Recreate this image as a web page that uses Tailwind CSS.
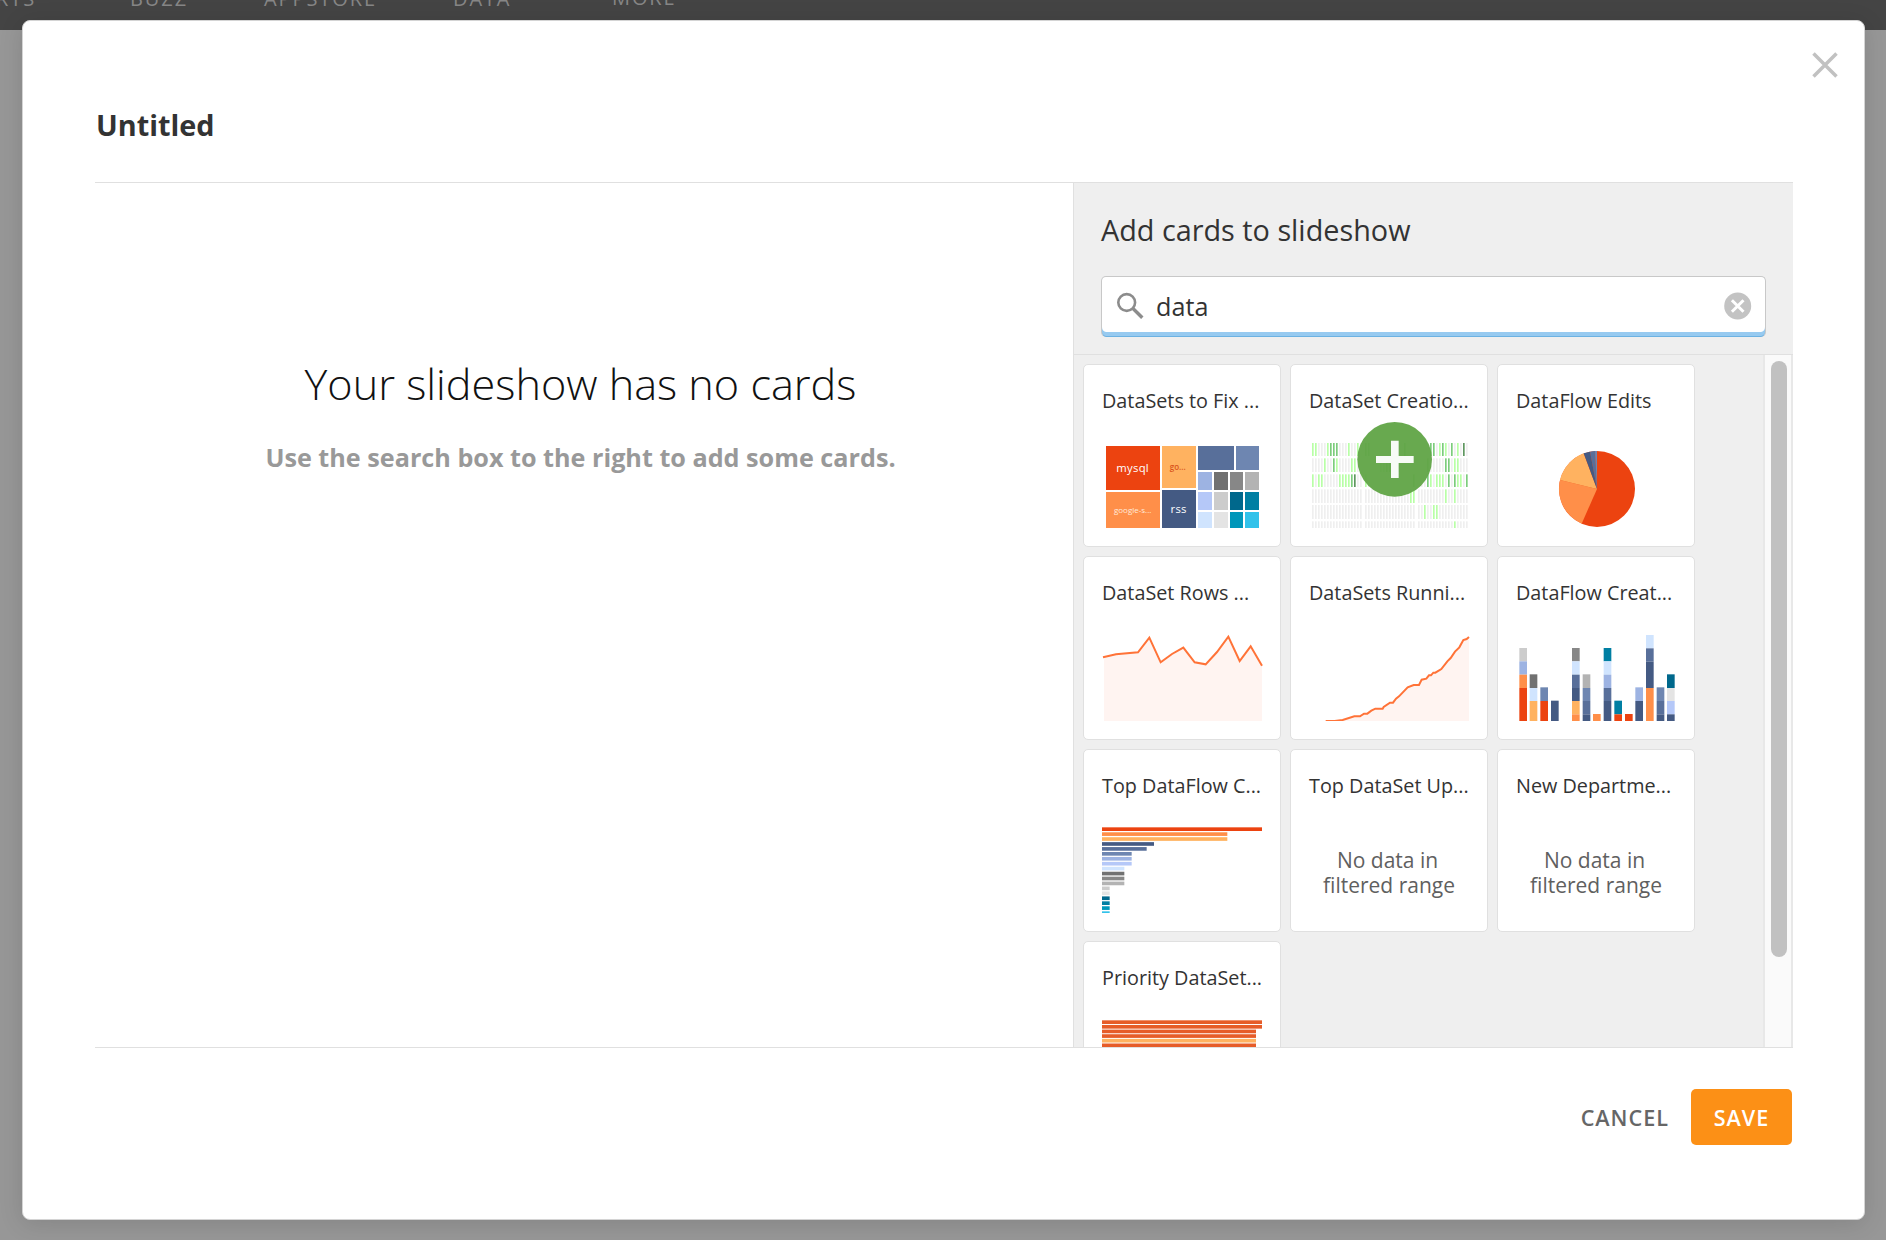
<!DOCTYPE html>
<html lang="en">
<head>
  <meta charset="UTF-8" />
  <meta name="viewport" content="width=device-width, initial-scale=1.0"/>
  <title>Edit Slideshow</title>
  <script src="https://cdn.jsdelivr.net/npm/@tailwindcss/browser@4"></script>
</head>
<body class="relative h-[1240px] w-[1886px] overflow-hidden bg-[#979797] font-['Open_Sans',sans-serif] text-[#333]">

  <!-- Page nav behind the modal -->
  <nav class="flex h-[30px] bg-[#444] text-[20px] leading-[28px] font-medium tracking-[1.9px] text-[#868686]">
    <span class="-mt-[15px] -ml-[4px] w-[134px]">RTS</span>
    <span class="-mt-[15px] w-[134px]">BUZZ</span>
    <span class="-mt-[15px] w-[189px]">APPSTORE</span>
    <span class="-mt-[15px] w-[159px]">DATA</span>
    <span class="-mt-[16px]">MORE</span>
  </nav>

  <!-- Modal -->
  <div class="absolute top-[20px] left-[22px] flex h-[1200px] w-[1843px] flex-col rounded-[8px] border border-[#d4d4d4] bg-white pr-[71px] pl-[72px] shadow-[0_4px_24px_rgba(0,0,0,0.12)]">
    <button class="absolute top-[31px] right-[26.5px]" aria-label="Close">
      <svg width="26" height="26" viewBox="0 0 26 26" fill="none" stroke="#c1c1c1" stroke-width="3.5"><path d="M1.5 1.5 24.5 24.5M24.5 1.5 1.5 24.5"/></svg>
    </button>

    <header class="h-[161px] shrink-0 pt-[84px] pl-px">
      <h1 class="text-[28.8px] leading-[40px] font-bold">Untitled</h1>
    </header>

    <main class="flex h-[866px] shrink-0 border-y border-[#e0e0e0]">
      <!-- Empty state -->
      <section class="w-[978px] pt-[171px] pr-[7px] text-center">
        <h2 class="text-[43.2px] leading-[60px] font-light whitespace-nowrap text-[#111]">Your slideshow has no cards</h2>
        <p class="mt-[25px] text-[25.2px] leading-[36px] font-bold whitespace-nowrap text-[#999]">Use the search box to the right to add some cards.</p>
      </section>

      <!-- Card picker -->
      <aside class="-mr-px flex w-[720px] shrink-0 flex-col border-l border-[#e0e0e0] bg-[#efefef]">
        <div class="h-[172px] shrink-0 border-b border-[#e0e0e0] pt-[27px] pl-[27px]">
          <h3 class="text-[28.8px] leading-[40px] whitespace-nowrap">Add cards to slideshow</h3>
          <div class="mt-[26px] flex h-[61px] w-[665px] items-center overflow-hidden rounded-[5px] border border-b-0 border-[#c8c8c8] bg-white shadow-[inset_0_-1px_#6cb2e2,inset_0_-5px_#97caf0]">
            <svg class="mb-[3px] ml-[14px]" width="28" height="28" viewBox="0 0 28 28" fill="none" stroke="#8c8c8c"><circle cx="10.7" cy="10.5" r="8.4" stroke-width="2.6"/><path d="M17 16.5 26.3 25.8" stroke-width="3.4"/></svg>
            <span class="mb-[3px] ml-[12px] text-[25.2px] leading-[36px]">data</span>
            <svg class="mr-[13px] mb-[2px] ml-auto" width="28" height="28" viewBox="0 0 28 28"><circle cx="13.7" cy="14" r="13.5" fill="#c3c3c3"/><path d="M7.9 8.2 19.5 19.8M19.5 8.2 7.9 19.8" stroke="#fff" stroke-width="3"/></svg>
          </div>
        </div>

        <div class="flex h-[692px] overflow-hidden">
          <div class="grid w-[689px] grid-cols-[198px_198px_198px] grid-rows-[192px_193px_192px_192px] gap-x-[9px] pt-[9px] pl-[9px]">

            <div class="h-[183px] overflow-hidden rounded-[5px] border border-[#e0e0e0] bg-white">
              <h4 class="h-[60px] pt-[22px] pl-[18px] text-[19.8px] leading-[28px] whitespace-nowrap">DataSets to Fix ...</h4>
              <svg width="196" height="121" viewBox="42 225 588 363" shape-rendering="crispEdges">
                <rect x="108" y="288" width="162" height="132" fill="#ec4310"/>
                <rect x="108" y="426" width="162" height="108" fill="#ff8f49"/>
                <rect x="276" y="288" width="102" height="126" fill="#ffb260"/>
                <rect x="276" y="420" width="102" height="114" fill="#445a83"/>
                <rect x="384" y="288" width="108" height="72" fill="#586f9a"/>
                <rect x="498" y="288" width="69" height="72" fill="#6e86b1"/>
                <rect x="384" y="366" width="42" height="54" fill="#9db3e2"/>
                <rect x="432" y="366" width="42" height="54" fill="#717171"/>
                <rect x="480" y="366" width="39" height="54" fill="#878787"/>
                <rect x="525" y="366" width="42" height="54" fill="#b3b3b3"/>
                <rect x="384" y="426" width="42" height="54" fill="#b5c8f8"/>
                <rect x="432" y="426" width="42" height="54" fill="#cccccc"/>
                <rect x="480" y="426" width="39" height="54" fill="#00688c"/>
                <rect x="525" y="426" width="42" height="54" fill="#007fa3"/>
                <rect x="384" y="486" width="42" height="48" fill="#d0e4fe"/>
                <rect x="432" y="486" width="42" height="48" fill="#e4e4e4"/>
                <rect x="480" y="486" width="39" height="48" fill="#0097ba"/>
                <rect x="525" y="486" width="42" height="48" fill="#32c2ea"/>
                <g text-anchor="middle" fill="#fff">
                  <text x="188" y="367" font-size="34" letter-spacing="0.8">mysql</text>
                  <text x="326" y="489" font-size="34" letter-spacing="0.8">rss</text>
                  <text x="188" y="489" font-size="24" font-weight="500" fill="#ffeadb">google-s...</text>
                  <text x="323" y="360" font-size="24" font-weight="600" fill="#d9521b">go...</text>
                </g>
              </svg>
            </div>

            <div class="h-[183px] overflow-hidden rounded-[5px] border border-[#e0e0e0] bg-white">
              <h4 class="h-[60px] pt-[22px] pl-[18px] text-[19.8px] leading-[28px] whitespace-nowrap">DataSet Creatio...</h4>
              <svg class="overflow-visible" width="196" height="121" viewBox="33 225 588 363">
                <g id="heatmap"></g>
                <circle cx="344" cy="328" r="112" fill="#62a548" fill-opacity="0.96"/>
                <path d="M333 272h23v46h45v21h-45v45h-23v-45h-45v-21h45z" fill="#fff" fill-opacity="0.95"/>
              </svg>
            </div>

            <div class="h-[183px] overflow-hidden rounded-[5px] border border-[#e0e0e0] bg-white">
              <h4 class="h-[60px] pt-[22px] pl-[18px] text-[19.8px] leading-[28px] whitespace-nowrap">DataFlow Edits</h4>
              <svg width="196" height="121" viewBox="24 225 588 363">
                <circle cx="321" cy="417" r="114" fill="#ec4310"/>
                <path d="M321 417 275 521A114 114 0 0 1 210 390Z" fill="#ff8f49"/>
                <path d="M321 417 210 390A114 114 0 0 1 281 310Z" fill="#ffb260"/>
                <path d="M321 417 281 310A114 114 0 0 1 300 305Z" fill="#445a83"/>
                <path d="M321 417 300 305A114 114 0 0 1 315 303Z" fill="#586f9a"/>
                <path d="M321 417 315 303A114 114 0 0 1 321 303Z" fill="#6e86b1"/>
              </svg>
            </div>

            <div class="h-[184px] overflow-hidden rounded-[5px] border border-[#e0e0e0] bg-white">
              <h4 class="h-[60px] pt-[22px] pl-[18px] text-[19.8px] leading-[28px] whitespace-nowrap">DataSet Rows ...</h4>
              <svg width="196" height="121" viewBox="42 201 588 363">
                <path d="M102 322 138 313 204 307 238 263 272 337 306 312 340 293 374 337 407 343 441 306 475 260 509 333 542 289 576 347V513H102Z" fill="#fff4f1"/>
                <path d="M99 322 138 313 204 307 238 263 272 337 306 312 340 293 374 337 407 343 441 306 475 260 509 333 542 289 576 347" fill="none" stroke="#ff7338" stroke-width="6"/>
              </svg>
            </div>

            <div class="h-[184px] overflow-hidden rounded-[5px] border border-[#e0e0e0] bg-white">
              <h4 class="h-[60px] pt-[22px] pl-[18px] text-[19.8px] leading-[28px] whitespace-nowrap">DataSets Runni...</h4>
              <svg width="196" height="121" viewBox="663 201 588 363">
                <path d="M794 512 818 510 853 499H870L882 491H892L916 476H938L960 458H969L978 446 1013 412 1031 405H1047L1055 389 1069 386 1077 376 1090 368 1114 357 1132 334 1142 324 1155 305 1168 292 1180 270 1197 262V513H794Z" fill="#fff4f1"/>
                <path d="M767 513H794L818 510 853 499H870L882 491H892L904 482 916 476H938L941 471 960 458H969L978 446 987 439 1013 412 1031 405H1047L1055 389 1069 386 1077 376H1083L1090 368H1096L1114 357 1132 334 1142 324 1155 305 1168 292 1180 270 1190 267 1197 261" fill="none" stroke="#ff7338" stroke-width="6"/>
                <rect x="663" y="513" width="588" height="6" fill="#fff"/>
              </svg>
            </div>

            <div class="h-[184px] overflow-hidden rounded-[5px] border border-[#e0e0e0] bg-white">
              <h4 class="h-[60px] pt-[22px] pl-[18px] text-[19.8px] leading-[28px] whitespace-nowrap">DataFlow Creat...</h4>
              <svg id="stacked" width="196" height="121" viewBox="24 201 588 363"></svg>
            </div>

            <div class="h-[183px] overflow-hidden rounded-[5px] border border-[#e0e0e0] bg-white">
              <h4 class="h-[60px] pt-[22px] pl-[18px] text-[19.8px] leading-[28px] whitespace-nowrap">Top DataFlow C...</h4>
              <svg id="top-bars" width="196" height="121" viewBox="42 210 588 363"></svg>
            </div>

            <div class="h-[183px] overflow-hidden rounded-[5px] border border-[#e0e0e0] bg-white">
              <h4 class="h-[60px] pt-[22px] pl-[18px] text-[19.8px] leading-[28px] whitespace-nowrap">Top DataSet Up...</h4>
              <p class="pt-[38px] text-center text-[21px] leading-[25px] text-[#5f6060]"><span class="mr-[3px]">No data in</span><br>filtered range</p>
            </div>

            <div class="h-[183px] overflow-hidden rounded-[5px] border border-[#e0e0e0] bg-white">
              <h4 class="h-[60px] pt-[22px] pl-[18px] text-[19.8px] leading-[28px] whitespace-nowrap">New Departme...</h4>
              <p class="pt-[38px] text-center text-[21px] leading-[25px] text-[#5f6060]"><span class="mr-[3px]">No data in</span><br>filtered range</p>
            </div>

            <div class="h-[183px] overflow-hidden rounded-[5px] border border-[#e0e0e0] bg-white">
              <h4 class="h-[60px] pt-[22px] pl-[18px] text-[19.8px] leading-[28px] whitespace-nowrap">Priority DataSet...</h4>
              <svg id="priority-bars" width="196" height="121" viewBox="42 786 588 363"></svg>
            </div>
          </div>

          <!-- Scrollbar -->
          <div class="flex w-[30px] border-x-2 border-[#e8e8e8] bg-[#fafafa] pt-[6px] pl-[6px]">
            <div class="h-[596px] w-[16px] rounded-full bg-[#c1c1c1]"></div>
          </div>
        </div>
      </aside>
    </main>

    <footer class="flex items-center justify-end pt-[41px] pr-px text-[21.6px] font-semibold tracking-[1px]">
      <button class="mr-[22px] pt-[2px] text-[#666]">CANCEL</button>
      <button class="h-[56px] w-[101px] rounded-[5px] bg-[#fc9016] pt-[2px] text-white">SAVE</button>
    </footer>
  </div>

</body>

<script>
  function addRect(parent, x, y, w, h, fill) {
    const r = document.createElementNS("http://www.w3.org/2000/svg", "rect");
    r.setAttribute("x", x);
    r.setAttribute("y", y);
    r.setAttribute("width", w);
    r.setAttribute("height", h);
    r.setAttribute("fill", fill);
    parent.appendChild(r);
  }

  // Heatmap: three groups of 17 ticks per row
  const heatmap = document.getElementById("heatmap");
  const light = "#b8ffa6", mid = "#7ccc7c", dark = "#5e975f";
  const rows = [
    { y: 279, h: 39, [light]: [96, 105, 141, 204, 231, 477, 495, 531], [mid]: [150, 159, 168, 255, 264, 336, 372, 450, 459, 486, 513], [dark]: [549] },
    { y: 325, h: 41, [light]: [132, 168, 213, 222, 300, 309, 522, 531], [mid]: [159, 318, 327, 345, 354, 441, 495, 504], [dark]: [] },
    { y: 373, h: 38, [light]: [96, 114, 123, 177, 186, 195, 204, 255, 450, 468, 477, 486, 531, 540], [mid]: [213, 399, 441, 504, 522, 558], [dark]: [222] },
    { y: 418, h: 41, [light]: [390, 399, 495, 522], [mid]: [], [dark]: [] },
    { y: 465, h: 42, [light]: [432, 459, 468], [mid]: [], [dark]: [] },
    { y: 514, h: 20, [light]: [522], [mid]: [], [dark]: [] }
  ];
  rows.forEach(row => {
    [96, 255, 414].forEach(start => {
      for (let i = 0; i < 17; i++) {
        const x = start + i * 9;
        const fill = [light, mid, dark].find(c => row[c].includes(x)) || "#efefef";
        addRect(heatmap, x, row.y, 5, row.h, fill);
      }
    });
  });

  // Stacked columns, segments listed top to bottom as [top, fill]
  const stacked = document.getElementById("stacked");
  const columns = [
    [88, [[294, "#ccc"], [334, "#9db3e2"], [374, "#ff8f49"], [414, "#ec4310"]]],
    [119, [[373, "#717171"], [414, "#d0e4fe"], [453, "#ffb260"]]],
    [151, [[412, "#6e86b1"], [453, "#ec4310"]]],
    [183, [[452, "#445a83"]]],
    [246, [[294, "#878787"], [334, "#d0e4fe"], [374, "#586f9a"], [414, "#445a83"], [453, "#ffb260"], [493, "#ff8f49"]]],
    [278, [[373, "#b3b3b3"], [414, "#6e86b1"], [453, "#586f9a"], [493, "#445a83"]]],
    [309, [[492, "#ff8f49"]]],
    [341, [[294, "#007fa3"], [334, "#d0e4fe"], [374, "#9db3e2"], [414, "#586f9a"], [453, "#445a83"]]],
    [373, [[452, "#007fa3"], [493, "#ec4310"]]],
    [405, [[492, "#ec4310"]]],
    [436, [[412, "#9db3e2"], [453, "#445a83"]]],
    [468, [[255, "#d0e4fe"], [295, "#586f9a"], [335, "#445a83"], [414, "#ff8f49"]]],
    [500, [[412, "#6e86b1"], [453, "#586f9a"], [493, "#445a83"]]],
    [531, [[373, "#00688c"], [414, "#e4e4e4"], [453, "#b5c8f8"], [493, "#445a83"]]]
  ];
  columns.forEach(([x, segments]) => {
    segments.forEach(([top, fill], i) => {
      const bottom = i + 1 < segments.length ? segments[i + 1][0] : 513;
      addRect(stacked, x, top, 23, bottom - top, fill);
    });
  });

  // Horizontal bars
  const topBars = document.getElementById("top-bars");
  [
    [480, "#ec4310"], [376, "#ff8f49"], [376, "#ffb260"], [156, "#445a83"], [134, "#586f9a"],
    [89, "#6e86b1"], [89, "#9db3e2"], [89, "#b5c8f8"], [67, "#d0e4fe"], [67, "#717171"],
    [67, "#878787"], [67, "#b3b3b3"], [23, "#ccc"], [23, "#e4e4e4"], [23, "#00688c"],
    [23, "#007fa3"], [23, "#0097ba"]
  ].forEach(([w, fill], i) => addRect(topBars, 96, 262 + i * 14.8, w, 11, fill));
  addRect(topBars, 96, 514, 23, 5, "#32c2ea");

  const priorityBars = document.getElementById("priority-bars");
  [
    [480, "#e65c28"], [480, "#e65c28"], [462, "#e65c28"], [462, "#e65c28"], [462, "#ffb260"], [462, "#e65c28"]
  ].forEach(([w, fill], i) => addRect(priorityBars, 96, 841 + i * 13.9, w, 11, fill));
</script>
</html>
